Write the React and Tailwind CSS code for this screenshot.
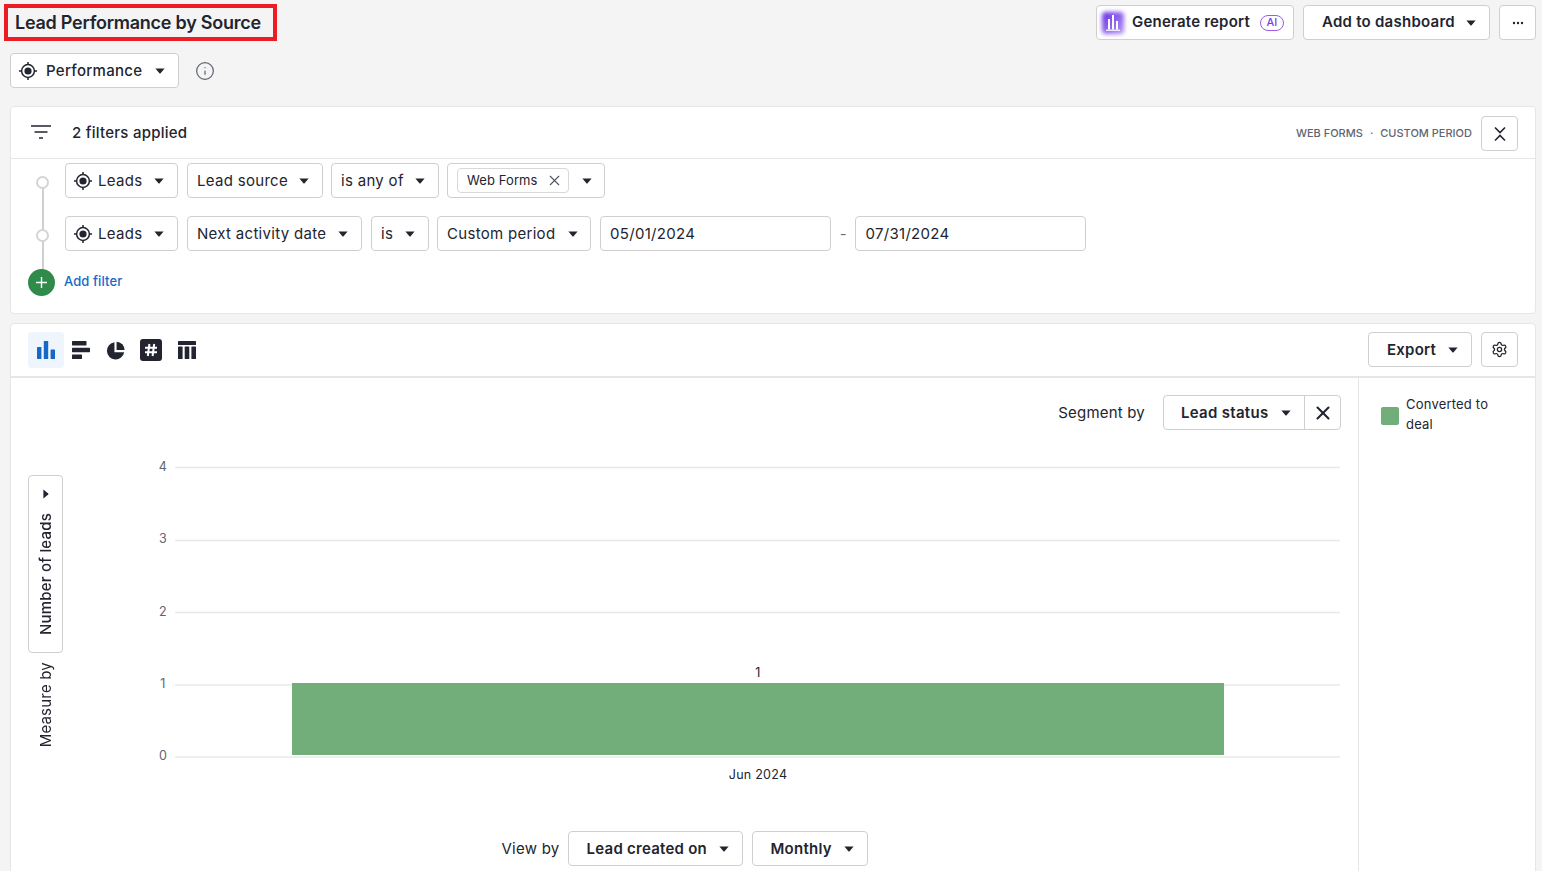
import React from "react";
import { Info, Settings, X } from "lucide-react";

const Caret = ({ className = "" }) => (
  <svg width="10" height="6" viewBox="0 0 10 6" className={className}>
    <path d="M0.4 0.4h9.2L5.6 5.2a.8.8 0 0 1-1.2 0z" fill="#22252f" />
  </svg>
);

const TargetIcon = ({ size = 18, className = "" }) => (
  <svg width={size} height={size} viewBox="0 0 18 18" fill="none" stroke="#22252f" className={`shrink-0 ${className}`}>
    <circle cx="9" cy="9" r="6.4" strokeWidth="1.5" />
    <circle cx="9" cy="9" r="3.6" fill="#22252f" stroke="none" />
    <path d="M9 0v3M9 15v3M0 9h3M15 9h3" strokeWidth="1.5" />
  </svg>
);

const Label = ({ children }) => <span className="pt-[2px]">{children}</span>;

const FilterSelect = ({ children, className = "", caretClass = "" }) => (
  <div className={`flex h-[35px] items-center justify-between rounded border border-[#cfcfcf] bg-white pl-[9px] pr-[13px] text-[15px] tracking-[0.3px] text-[#22252f] ${className}`}>
    {children}
    <Caret className={caretClass} />
  </div>
);

const ActionButton = ({ children, className = "" }) => (
  <div className={`flex h-[35px] items-center justify-between rounded border border-[#cfcfcf] bg-white pl-[18px] pr-[13px] text-[15px] font-semibold tracking-[0.25px] text-[#22252f] ${className}`}>
    {children}
    <Caret />
  </div>
);

const BarChartIcon = () => (
  <svg width="18" height="18" viewBox="0 0 18 18" fill="#1668c7">
    <rect x="0" y="6" width="4.4" height="12" rx="0.6" />
    <rect x="6.8" y="0" width="4.4" height="18" rx="0.6" />
    <rect x="13.6" y="8.5" width="4.4" height="9.5" rx="0.6" />
  </svg>
);

const RowsIcon = () => (
  <svg width="18" height="18" viewBox="0 0 18 18" fill="#22252f">
    <rect x="0" y="0" width="14.5" height="4.4" rx="0.6" />
    <rect x="0" y="6.8" width="18" height="4.4" rx="0.6" />
    <rect x="0" y="13.6" width="10" height="4.4" rx="0.6" />
  </svg>
);

const PieIcon = () => (
  <svg width="19" height="19" viewBox="0 0 18 18" fill="#22252f">
    <path d="M8 1.2A8.2 8.2 0 1 0 17.2 10.6H8z" />
    <path d="M10 0.6a8 8 0 0 1 7.6 8H10z" />
  </svg>
);

const NumberIcon = () => (
  <div className="flex h-[22px] w-[22px] items-center justify-center rounded-[3px] bg-[#22252f]">
    <svg width="14" height="14" viewBox="0 0 14 14" fill="none" stroke="#fff" strokeWidth="2">
      <path d="M5.4 1L3.8 13M10.2 1L8.6 13M1 4.8h12M1 9.2h12" />
    </svg>
  </div>
);

const TableIcon = () => (
  <svg width="18" height="18" viewBox="0 0 18 18" fill="#22252f">
    <rect x="0" y="0" width="18" height="4" rx="0.6" />
    <rect x="0" y="5.6" width="4.6" height="12.4" rx="0.6" />
    <rect x="6.7" y="5.6" width="4.6" height="12.4" rx="0.6" />
    <rect x="13.4" y="5.6" width="4.6" height="12.4" rx="0.6" />
  </svg>
);

const gridLines = [
  { label: "4", y: 7.5, ty: 11 },
  { label: "3", y: 80.5, ty: 82.5 },
  { label: "2", y: 152.5, ty: 155.5 },
  { label: "1", y: 225, ty: 228 },
  { label: "0", y: 297, ty: 300 },
];

// the svg starts at x=63 and y=460 on the page
const Chart = () => (
  <svg width="1295" height="340" className="shrink-0 text-[12.5px] tracking-[0.25px]" style={{ fontFamily: "Inter, sans-serif" }}>
    {gridLines.map((g) => (
      <g key={g.label}>
        <line x1="112" x2="1277" y1={g.y} y2={g.y} stroke="#e8e8e8" strokeWidth="1.5" />
        <text x="100" y={g.ty} textAnchor="middle" fill="#5f6672">{g.label}</text>
      </g>
    ))}
    <rect x="229" y="223" width="932" height="72" fill="#72ae7a" />
    <text x="695" y="217" textAnchor="middle" fill="#22252f">1</text>
    <text x="695" y="319" textAnchor="middle" fill="#22252f">Jun 2024</text>
  </svg>
);

export default function App() {
  return (
    <div className="h-[871px] overflow-hidden bg-[#f4f4f4] pl-[10px] pr-[6px] text-[#22252f]" style={{ fontFamily: "Inter, sans-serif" }}>
      {/* header */}
      <div className="flex items-start justify-between pt-[4px]">
        <div className="-ml-[6px] flex h-[37px] w-[273px] items-center border-4 border-[#ed1c24] pb-[1px] pl-[7px] text-[18px] font-semibold tracking-[-0.25px] text-[#22252f]">
          Lead Performance by Source
        </div>
        <div className="flex items-center gap-[9px] pt-[1px]">
          <div className="flex h-[35px] w-[198px] items-center rounded border border-[#cfcfcf] bg-white pl-[4px] text-[15px] font-semibold tracking-[0.2px]">
            <div className="relative flex h-[24px] w-[24px] items-center justify-center">
              <div className="absolute inset-[1px] rounded-[4px] bg-gradient-to-br from-[#6a1fe0] to-[#b794f6] blur-[2px]" />
              <svg width="14" height="17" viewBox="0 0 14 17" fill="#fff" className="relative">
                <rect x="2" y="5" width="2" height="10.5" />
                <rect x="6" y="1" width="2" height="14.5" />
                <rect x="10" y="7" width="2" height="8.5" />
                <rect x="0" y="15.6" width="14" height="1.2" />
              </svg>
            </div>
            <span className="ml-[7px]">Generate report</span>
            <span className="ml-[10px] flex h-[16px] w-[24px] items-center justify-center rounded-full border border-[#9b5de5] text-[11px] font-medium tracking-normal text-[#7c3aed]">AI</span>
          </div>
          <ActionButton className="w-[187px]">Add to dashboard</ActionButton>
          <div className="flex h-[35px] w-[37px] items-center justify-center rounded border border-[#cfcfcf] bg-white">
            <svg width="12" height="4" viewBox="0 0 12 4" fill="#22252f">
              <circle cx="2" cy="2" r="1.2" />
              <circle cx="6" cy="2" r="1.2" />
              <circle cx="10" cy="2" r="1.2" />
            </svg>
          </div>
        </div>
      </div>

      {/* report type */}
      <div className="mt-[12px] flex items-center">
        <div className="flex h-[35px] w-[169px] items-center justify-between rounded border border-[#cfcfcf] bg-white pl-[9px] pr-[13px] text-[15px] font-medium tracking-[0.3px]">
          <TargetIcon className="-ml-[1px]" />
          <span className="ml-[9px] mr-auto pt-[2px]">Performance</span>
          <Caret />
        </div>
        <Info size={20} strokeWidth={1.5} className="ml-[16px] text-[#5f6672]" />
      </div>

      {/* filters */}
      <div className="relative mt-[18px] h-[208px] rounded border border-[#e6e6e6] bg-white">
        <div className="flex h-[52px] items-center border-b border-[#e6e6e6] pl-[20px] pr-[17px] pt-[2px]">
          <svg width="20" height="14" viewBox="0 0 20 14" fill="none" stroke="#22252f" strokeWidth="1.6" className="mb-[4px]">
            <path d="M0 1h20M3.5 7h13M8 13h4" />
          </svg>
          <span className="ml-[21px] text-[15px] font-medium tracking-[0.25px]">2 filters applied</span>
          <div className="ml-auto flex items-center text-[11px] font-medium text-[#5f6672]">
            <span>WEB FORMS</span>
            <span className="mx-[7px]">·</span>
            <span>CUSTOM PERIOD</span>
          </div>
          <div className="ml-[9px] flex h-[35px] w-[37px] items-center justify-center rounded border border-[#cfcfcf]">
            <svg width="14" height="16" viewBox="0 0 14 16" fill="none" stroke="#22252f" strokeWidth="1.6">
              <path d="M2 1.5l5 5 5-5M2 14.5l5-5 5 5" />
            </svg>
          </div>
        </div>

        <div className="absolute left-[31px] top-[75px] h-[90px] w-[1.5px] bg-[#cfcfcf]" />

        <div className="mt-[4px] flex h-[35px] items-center gap-[9px] pl-[54px]">
          <span className="absolute left-[25px] top-[69px] h-[13px] w-[13px] rounded-full border-2 border-[#d4d4d4] bg-white" />
          <FilterSelect className="w-[113px]">
            <span className="flex items-center gap-[6px]"><TargetIcon className="-ml-[1px]" /><Label>Leads</Label></span>
          </FilterSelect>
          <FilterSelect className="w-[136px]"><Label>Lead source</Label></FilterSelect>
          <FilterSelect className="-ml-[1px] w-[108px]"><Label>is any of</Label></FilterSelect>
          <FilterSelect className="-ml-[1px] w-[158px]" caretClass="translate-x-[1px]">
            <span className="flex h-[25px] w-[112px] items-center justify-between rounded border border-[#d8d8d8] pl-[9px] pr-[5px] text-[13px] tracking-[0.1px]">
              Web Forms
              <X size={17} strokeWidth={1.5} className="text-[#4f5560]" />
            </span>
          </FilterSelect>
        </div>

        <div className="mt-[18px] flex h-[35px] items-center gap-[9px] pl-[54px]">
          <span className="absolute left-[25px] top-[122px] h-[13px] w-[13px] rounded-full border-2 border-[#d4d4d4] bg-white" />
          <FilterSelect className="w-[113px]">
            <span className="flex items-center gap-[6px]"><TargetIcon className="-ml-[1px]" /><Label>Leads</Label></span>
          </FilterSelect>
          <FilterSelect className="w-[175px]"><Label>Next activity date</Label></FilterSelect>
          <FilterSelect className="w-[58px]"><Label>is</Label></FilterSelect>
          <FilterSelect className="-ml-[1px] w-[154px]" caretClass="translate-x-[1px]"><Label>Custom period</Label></FilterSelect>
          <div className="flex h-[35px] w-[231px] items-center rounded border border-[#cfcfcf] pl-[9px] text-[15px] tracking-[0.3px]"><Label>05/01/2024</Label></div>
          <span className="text-[14px] text-[#5f6672]">-</span>
          <div className="flex h-[35px] w-[231px] items-center rounded border border-[#cfcfcf] pl-[9px] text-[15px] tracking-[0.3px]"><Label>07/31/2024</Label></div>
        </div>

        <div className="mt-[18px] flex items-center pl-[17px]">
          <div className="relative flex h-[27px] w-[27px] items-center justify-center rounded-full bg-[#2e8b4a]">
            <svg width="11" height="11" viewBox="0 0 11 11" stroke="#fff" strokeWidth="1.4">
              <path d="M5.5 0v11M0 5.5h11" />
            </svg>
          </div>
          <span className="ml-[9px] pb-[2px] text-[13px] font-medium tracking-[0.1px] text-[#1668c7]">Add filter</span>
        </div>
      </div>

      {/* chart card */}
      <div className="mt-[9px] h-[560px] rounded-t border border-[#e6e6e6] bg-white">
        <div className="flex h-[54px] items-center border-b-2 border-[#e6e6e6] pl-[17px] pr-[17px]">
          <div className="flex h-[36px] w-[36px] items-center justify-center rounded bg-[#eff5fd]"><BarChartIcon /></div>
          <div className="flex h-[36px] w-[34px] items-center justify-center"><RowsIcon /></div>
          <div className="flex h-[36px] w-[35px] items-center justify-center"><PieIcon /></div>
          <div className="flex h-[36px] w-[35px] items-center justify-center"><NumberIcon /></div>
          <div className="flex h-[36px] w-[38px] items-center justify-center"><TableIcon /></div>
          <ActionButton className="-mt-[1px] ml-auto w-[104px]"><Label>Export</Label></ActionButton>
          <div className="-mt-[1px] ml-[9px] flex h-[35px] w-[37px] items-center justify-center rounded border border-[#cfcfcf]">
            <Settings size={17} strokeWidth={1.8} />
          </div>
        </div>

        <div className="flex h-[504px]">
          <div className="w-[1348px] shrink-0 border-r border-[#e6e6e6]">
            <div className="flex items-center justify-end pr-[17px] pt-[17px]">
              <span className="mr-[18px] pt-[2px] text-[15px] tracking-[0.2px]">Segment by</span>
              <div className="flex h-[35px] w-[178px] rounded border border-[#cfcfcf]">
                <div className="flex flex-1 items-center justify-between border-r border-[#cfcfcf] pl-[17px] pr-[13px] text-[15px] font-semibold tracking-[0.3px]">
                  <Label>Lead status</Label>
                  <Caret />
                </div>
                <div className="flex w-[35px] items-center justify-center">
                  <X size={22} strokeWidth={2.3} />
                </div>
              </div>
            </div>

            <div className="mt-[30px] flex">
              <div className="ml-[17px] mt-[15px] flex w-[35px] flex-col items-center">
                <div className="flex h-[178px] w-[35px] flex-col items-center rounded border border-[#cfcfcf] pt-[15px]">
                  <Caret className="-rotate-90" />
                  <span className="ml-[2px] mt-[16px] rotate-180 text-[15px] font-medium tracking-[0.2px] [writing-mode:vertical-rl]">Number of leads</span>
                </div>
                <span className="ml-[2px] mt-[9px] rotate-180 text-[15px] tracking-[0.2px] [writing-mode:vertical-rl]">Measure by</span>
              </div>
              <Chart />
            </div>

            <div className="mt-[31px] flex items-center justify-center">
              <span className="mr-[8px] mt-[1px] text-[15px] tracking-[0.25px]">View by</span>
              <ActionButton className="w-[175px]"><Label>Lead created on</Label></ActionButton>
              <ActionButton className="ml-[9px] w-[116px]"><Label>Monthly</Label></ActionButton>
            </div>
          </div>

          <div className="flex items-start pl-[22px] pt-[16px]">
            <span className="mt-[13px] h-[18px] w-[18px] rounded-[2px] bg-[#72ae7a]" />
            <span className="ml-[7px] w-[100px] text-[13px] leading-[20px] tracking-[0.2px]">Converted to deal</span>
          </div>
        </div>
      </div>
    </div>
  );
}
